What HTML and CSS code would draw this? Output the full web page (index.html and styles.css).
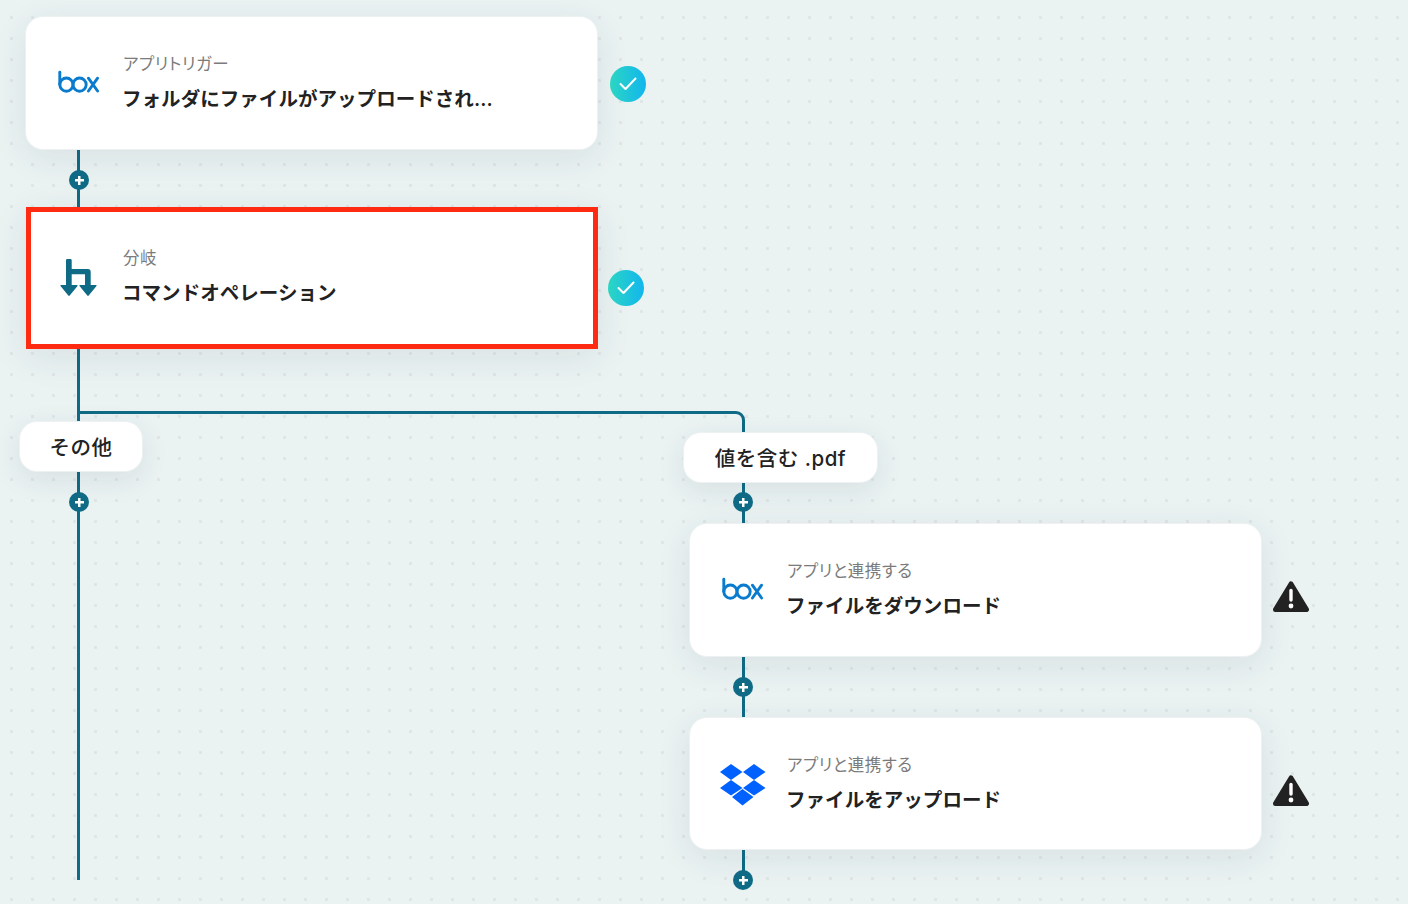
FILE: index.html
```
<!DOCTYPE html>
<html lang="ja">
<head>
<meta charset="utf-8">
<title>フロー</title>
<link rel="stylesheet" href="styles.css">
</head>
<body>
<main class="canvas">
  <svg class="wires" width="1408" height="904" viewBox="0 0 1408 904" fill="none" aria-hidden="true">
    <path class="wire" d="M78.5 148V880"/>
    <path class="wire" d="M78.5 412.500H736a7.500 7.500 0 0 1 7.500 7.500V880"/>
  </svg>

  <section class="card card-trigger">
    <div class="card-icon">
      <svg class="boxlogo" width="42" height="24" viewBox="58 70 42 24" fill="none" stroke="#0a7bcd" stroke-width="2.9" stroke-linecap="round"><path d="M59.8 72.2V84.6"/><circle cx="66.4" cy="84.6" r="6.6"/><circle cx="79.6" cy="84.6" r="6.6"/><path d="M88.4 78.2 97.6 91M97.6 78.2 88.4 91"/></svg>
    </div>
    <div class="card-text">
      <p class="card-sub">アプリトリガー</p>
      <p class="card-title">フォルダにファイルがアップロードされ...</p>
    </div>
  </section>
  <div class="check check-1"><svg width="18" height="14" viewBox="0 0 18 14" fill="none" stroke="#fff" stroke-width="2" stroke-linecap="round" stroke-linejoin="round"><path d="M1.500 7 6.500 12 16.500 1.500"/></svg></div>

  <section class="card card-branch">
    <div class="card-icon">
      <svg width="38" height="38" viewBox="60 259 38 38" fill="#0f6a85"><path d="M66 261a2.800 2.800 0 0 1 5.700 0v8h16a3 3 0 0 1 3 3v13h5.300q1 0 .5 1l-7.800 9.500q-.7.800-1.400 0L79.500 286q-.5-1 .5-1h5v-10.800H71.700V285H77q1 0 .5 1l-7.800 9.500q-.7.800-1.400 0L60.500 286q-.5-1 .5-1h5z"/></svg>
    </div>
    <div class="card-text">
      <p class="card-sub">分岐</p>
      <p class="card-title">コマンドオペレーション</p>
    </div>
  </section>
  <div class="check check-2"><svg width="18" height="14" viewBox="0 0 18 14" fill="none" stroke="#fff" stroke-width="2" stroke-linecap="round" stroke-linejoin="round"><path d="M1.500 7 6.500 12 16.500 1.500"/></svg></div>

  <div class="pill pill-other">その他</div>
  <div class="pill pill-pdf">値を含む .pdf</div>

  <section class="card card-download">
    <div class="card-icon">
      <svg class="boxlogo" width="42" height="24" viewBox="58 70 42 24" fill="none" stroke="#0a7bcd" stroke-width="2.9" stroke-linecap="round"><path d="M59.8 72.2V84.6"/><circle cx="66.4" cy="84.6" r="6.6"/><circle cx="79.6" cy="84.6" r="6.6"/><path d="M88.4 78.2 97.6 91M97.6 78.2 88.4 91"/></svg>
    </div>
    <div class="card-text">
      <p class="card-sub">アプリと連携する</p>
      <p class="card-title">ファイルをダウンロード</p>
    </div>
  </section>
  <div class="warn warn-1"><svg width="36" height="32" viewBox="0 0 36 32"><path d="M18 3 33.500 28.500H2.500z" fill="#222" stroke="#222" stroke-width="5" stroke-linejoin="round"/><path d="M18 9.500V19" stroke="#fff" stroke-width="3.400" stroke-linecap="round"/><circle cx="18" cy="25" r="2.400" fill="#fff"/></svg></div>

  <section class="card card-upload">
    <div class="card-icon">
      <svg class="dropbox" width="46" height="42" viewBox="720 765 46 42" fill="#0061fe"><path d="M731 765 742.500 773 731 781 720 773zM754 765 765.500 773 754 781 743 773zM731 781 742.500 789 731 796.500 720 789zM754 781 765.500 789 754 796.500 743 789zM742.500 790 753.500 798 742.500 806.500 732 798z"/></svg>
    </div>
    <div class="card-text">
      <p class="card-sub">アプリと連携する</p>
      <p class="card-title">ファイルをアップロード</p>
    </div>
  </section>
  <div class="warn warn-2"><svg width="36" height="32" viewBox="0 0 36 32"><path d="M18 3 33.500 28.500H2.500z" fill="#222" stroke="#222" stroke-width="5" stroke-linejoin="round"/><path d="M18 9.500V19" stroke="#fff" stroke-width="3.400" stroke-linecap="round"/><circle cx="18" cy="25" r="2.400" fill="#fff"/></svg></div>

  <button class="add add-1" type="button" aria-label="追加"></button>
  <button class="add add-2" type="button" aria-label="追加"></button>
  <button class="add add-3" type="button" aria-label="追加"></button>
  <button class="add add-4" type="button" aria-label="追加"></button>
  <button class="add add-5" type="button" aria-label="追加"></button>
</main>
</body>
</html>
```
FILE: styles.css
```
* { box-sizing: border-box; }
html, body { margin: 0; padding: 0; }
body {
  width: 1408px;
  height: 904px;
  overflow: hidden;
  font-family: Inter, "Noto Sans CJK JP", sans-serif;
  color: #222;
}
.canvas {
  position: relative;
  width: 1408px;
  height: 904px;
  overflow: hidden;
  background-color: #eaf2f2;
  background-image: radial-gradient(circle, #dfe4e5 0, #dfe4e5 1.3px, transparent 1.9px);
  background-size: 21px 21px;
  background-position: 1px 7px;
}
.wires { position: absolute; left: 0; top: 0; }
.wire { stroke: #0f6a85; stroke-width: 3; }

.card {
  position: absolute;
  width: 573px;
  height: 134px;
  display: flex;
  align-items: center;
  background: #fff;
  border-radius: 18px;
  border: 1px solid #eef1f1;
  box-shadow: 0 8px 34px rgba(40, 70, 75, .09);
}
.card-trigger { left: 25px; top: 16px; }
.card-branch {
  left: 26px; top: 207px;
  width: 572px; height: 142px;
  border: 5px solid #ff2a12;
  border-radius: 0;
}
.card-download { left: 689px; top: 523px; }
.card-upload { left: 689px; top: 717px; height: 133px; }

.card-icon {
  flex: 0 0 97px;
  display: flex;
  justify-content: center;
  padding-left: 8px;
}
.card-icon svg { display: block; }
.card-branch .card-icon { flex-basis: 92px; padding-left: 3px; }
.card-icon .dropbox { margin-top: 3px; }
.card-icon .boxlogo { margin-bottom: 2px; }
.card-text {
  display: flex;
  flex-direction: column;
  gap: 10px;
}
.card-branch .card-text { margin-top: -2px; }
.card-sub {
  margin: 0;
  font-size: 16.5px;
  line-height: 22px;
  letter-spacing: .55px;
  font-feature-settings: "palt";
  color: #7b7b7b;
}
.card-title {
  margin: 0 0 0 -1px;
  font-size: 19.5px;
  line-height: 28px;
  font-weight: 600;
  letter-spacing: .05px;
  color: #222;
}

.pill {
  position: absolute;
  height: 51px;
  display: flex;
  align-items: center;
  justify-content: center;
  padding-bottom: 2px;
  background: #fff;
  border: 1px solid #eef1f1;
  border-radius: 18px;
  font-size: 20.5px;
  font-weight: 500;
  letter-spacing: .5px;
  box-shadow: 0 8px 28px rgba(40, 70, 75, .09);
}
.pill-other { left: 19px; top: 421px; width: 124px; }
.pill-pdf { left: 683px; top: 432px; width: 195px; }

.check {
  position: absolute;
  width: 36px;
  height: 36px;
  display: flex;
  align-items: center;
  justify-content: center;
  border-radius: 50%;
  background: linear-gradient(90deg, #2bd6c2, #12b6ee);
}
.check-1 { left: 610px; top: 66px; }
.check-2 { left: 608px; top: 270px; }

.warn { position: absolute; width: 36px; height: 32px; }
.warn svg { display: block; }
.warn-1 { left: 1273px; top: 581px; }
.warn-2 { left: 1273px; top: 775px; }

.add {
  position: absolute;
  width: 20px;
  height: 20px;
  padding: 0;
  border: 0;
  border-radius: 50%;
  background:
    linear-gradient(#fff, #fff) center / 9px 2.500px no-repeat,
    linear-gradient(#fff, #fff) center / 2.500px 9px no-repeat,
    #0f6a85;
}
.add-1 { left: 69px; top: 170px; }
.add-2 { left: 69px; top: 492px; }
.add-3 { left: 733px; top: 492px; }
.add-4 { left: 733px; top: 677px; }
.add-5 { left: 733px; top: 870px; }
```
